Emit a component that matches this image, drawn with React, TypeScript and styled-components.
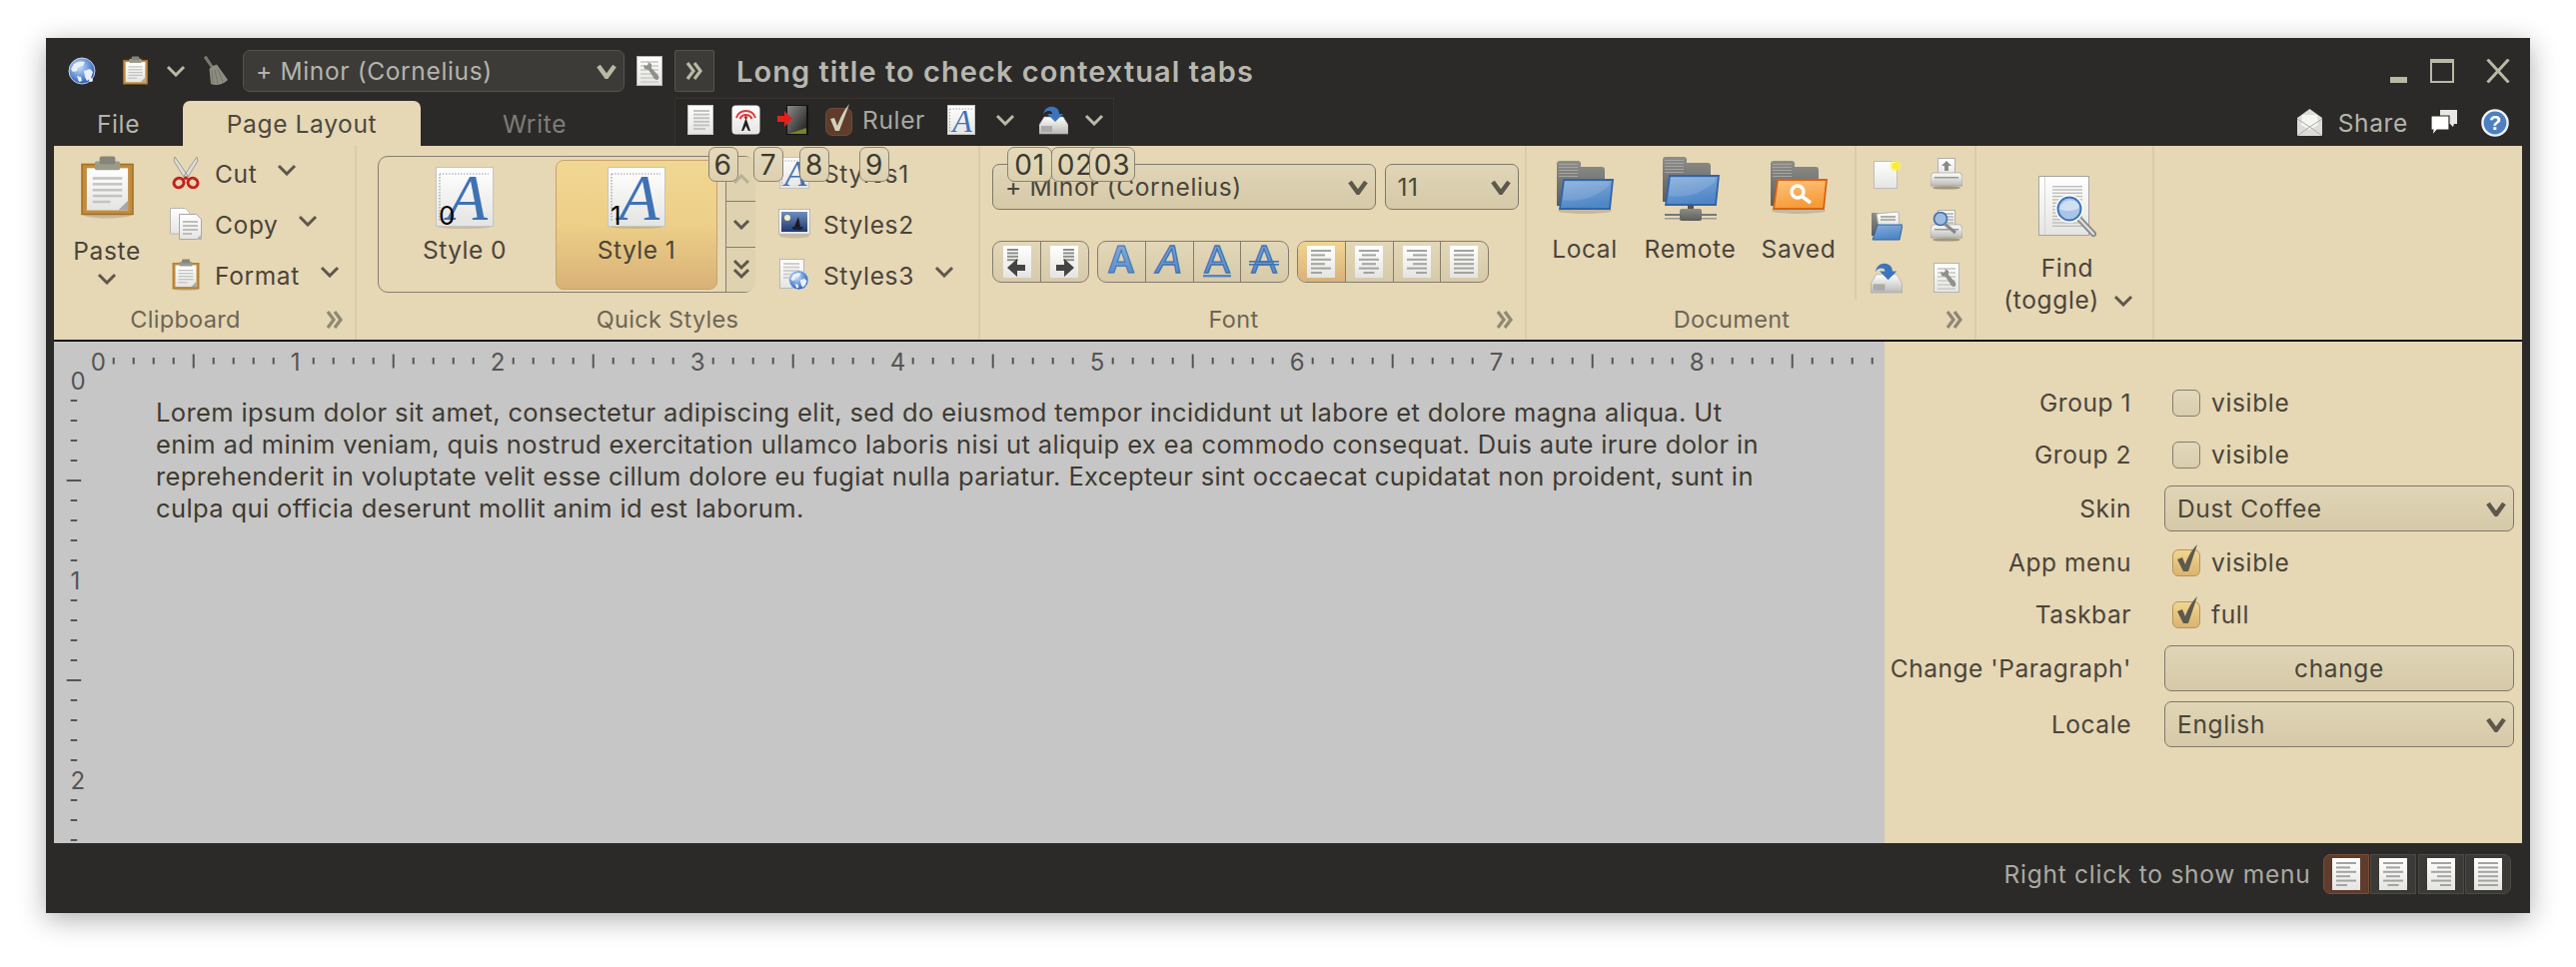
import React from "react";
import styled, { createGlobalStyle } from "styled-components";

const FONT = `Inter, "Noto Sans", "Liberation Sans", sans-serif`;
const G = createGlobalStyle`
  html, body { margin: 0; padding: 0; background: #fff; }
  body { font-family: ${FONT}; }
`;

const Page = styled.div`
  width: 2578px; height: 968px; padding: 38px 0 0 46px; box-sizing: border-box; overflow: hidden;
`;
const Win = styled.div`
  position: relative; width: 2486px; height: 876px; background: #2b2a28; display: flex; flex-direction: column;
  box-shadow: 0 6px 26px rgba(0,0,0,.32); font-size: 24.5px; letter-spacing: .65px;
`;
const TitleRow = styled.div`
  height: 58px; flex: none; display: flex; align-items: center; padding: 8px 20px 0 22px; box-sizing: border-box;
`;
const Slot = styled.span<{ $ml?: number }>`
  display: inline-flex; flex: none; align-items: center; justify-content: center; margin-left: ${p => p.$ml ?? 0}px;
`;
const Title = styled.div`
  margin-left: 22px; font-size: 29px; font-weight: 600; letter-spacing: 1.05px; color: #b7b7b0; white-space: nowrap;
`;
const WinControls = styled.div`
  margin-left: auto; display: flex; align-items: center; gap: 23px;
`;
const DarkBtn = styled.span`
  margin-left: 12px; width: 40px; height: 42px; box-sizing: border-box; background: #3c3b37; border: 1px solid #55544e; border-radius: 2px;
  display: flex; align-items: center; justify-content: center;
`;
const TabsRow = styled.div`
  height: 50px; flex: none; display: flex; align-items: stretch; padding: 0 21px 0 8px; box-sizing: border-box;
`;
const Tab = styled.div<{ $w: number; $active?: boolean; $muted?: boolean }>`
  width: ${p => p.$w}px; margin-top: 5px; flex: none; display: flex; align-items: center; justify-content: center;
  border-radius: 7px 7px 0 0;
  background: ${p => (p.$active ? "#e6d7b5" : "transparent")};
  color: ${p => (p.$active ? "#4d483d" : p.$muted ? "#7e7d77" : "#b4b4ad")};
`;
const Taskbar = styled.div`
  margin: 2px 0 0 26px; width: 440px; box-sizing: border-box; display: flex; align-items: center; padding: 0 0 5px 12px; color: #a8a8a0;
  background: #292826; border-top: 1px solid #37332c; border-left: 1px solid #37332c; border-right: 1px solid #37332c;
`;
const ShareBox = styled.div`
  margin-left: auto; display: flex; align-items: center; color: #b4b4ad; padding-top: 3px;
`;
const Ribbon = styled.div`
  margin: 0 8px; height: 194px; flex: none; background: #e6d7b5; display: flex; color: #4a453a;
`;
const BlackLine = styled.div`
  margin: 0 8px; height: 2px; flex: none; background: #141311;
`;
const Band = styled.div<{ $w: number; $noSep?: boolean }>`
  width: ${p => p.$w}px; flex: none; box-sizing: border-box; display: flex; flex-direction: column; 
  border-right: ${p => (p.$noSep ? "none" : "2px solid #dccba9")};
`;
const BandBody = styled.div`
  height: 154px; flex: none; display: flex; box-sizing: border-box;
`;
const BandTitle = styled.div`
  height: 40px; flex: none; display: flex; align-items: center; color: #6d6655; font-size: 23.5px; letter-spacing: .3px; padding-bottom: 1px; box-sizing: border-box;
`;
const BandLabel = styled.div`
  flex: 1; text-align: center;
`;
const Launcher = styled.div`
  width: 38px; flex: none; box-sizing: border-box; padding-left: 9px; display: flex; align-items: center;
`;
const PasteCol = styled.div`
  width: 106px; flex: none; display: flex; flex-direction: column; align-items: center; padding-top: 9px; box-sizing: border-box;
`;
const PasteLabel = styled.div`
  margin-top: 15px; line-height: 34px; margin-bottom: 5px;
`;
const RowsCol = styled.div<{ $ml?: number }>`
  margin-left: ${p => p.$ml ?? 0}px; display: flex; flex-direction: column; padding-top: 1px;
`;
const CmdRow = styled.div`
  height: 52px; display: flex; align-items: center; gap: 13px; white-space: nowrap;
`;
const CmdLabel = styled.span`
  padding-top: 2px;
`;
const CmdIcon = styled.span`
  width: 32px; flex: none; display: flex; justify-content: center;
`;
const CmdChevron = styled.span`
  margin-left: 7px; display: flex; padding-bottom: 6px;
`;
const Gallery = styled.div`
  margin: 10px 0 0 21px; width: 377px; height: 137px; box-sizing: border-box; border: 1.5px solid #857e6e; border-radius: 10px; display: flex;
  padding: 2.5px 0 2.5px 5px; flex: none;
`;
const GalleryItem = styled.div<{ $on?: boolean }>`
  width: 162px; flex: none; display: flex; flex-direction: column; align-items: center; box-sizing: border-box; padding-top: 6px; border-radius: 8px;
  margin-right: 10px;
  ${p => p.$on ? "background: linear-gradient(#f1d793 0%, #edcf88 50%, #d8b177 100%); border: 1px solid #c8a36d;" : "border: 1px solid transparent;"}
`;
const StyleThumb = styled.div`
  position: relative; width: 58px; height: 62px;
`;
const ThumbDigit = styled.span`
  position: absolute; left: 3px; top: 36px; color: #000; font-size: 26px; line-height: 26px; letter-spacing: 0;
`;
const ItemLabel = styled.div`
  margin-top: 3px; line-height: 36px; letter-spacing: .45px;
`;
const ScrollCol = styled.div`
  margin: -2.5px 0 -2.5px -2px; width: 29px; flex: none; display: flex; flex-direction: column; background: #ded2b0; border-left: 1.5px solid #857e6e; border-radius: 0 9px 9px 0; 
`;
const ScrollBtn = styled.div<{ $last?: boolean }>`
  flex: 1; display: flex; align-items: center; justify-content: center; border-bottom: ${p => (p.$last ? "none" : "1.5px solid #857e6e")};
`;
const FontBody = styled.div`
  display: flex; flex-direction: column; padding: 18px 0 0 12px; gap: 31px;
`;
const Line = styled.div<{ $gap: number }>`
  display: flex; gap: ${p => p.$gap}px;
`;
const Combo = styled.div<{ $w?: number; $h?: number; $dark?: boolean }>`
  width: ${p => (p.$w ? p.$w + "px" : "100%")}; height: ${p => p.$h ?? 46}px; flex: none; box-sizing: border-box; display: flex; align-items: center; justify-content: space-between;
  padding: 0 7px 0 12px; border-radius: 7px; white-space: nowrap;
  ${p => p.$dark
    ? "background: #3c3b37; border: 1.5px solid #55544e; color: #b4b4ad; margin-left: 15px;"
    : "background: linear-gradient(#e0d5b6, #d5c9a8); border: 1.5px solid #7f7969; color: #4a453a;"}
`;
const Strip = styled.div`
  display: flex; height: 42px; box-sizing: border-box; border: 1.5px solid #857e6e; border-radius: 9px; overflow: hidden; background: linear-gradient(#e2d7b8, #d6caaa);
`;
const StripBtn = styled.div<{ $on?: boolean; $w?: number; $first?: boolean }>`
  width: ${p => p.$w ?? 47.5}px; box-sizing: border-box; display: flex; align-items: center; justify-content: center;
  border-left: ${p => (p.$first ? "none" : "1.5px solid #857e6e")};
  ${p => p.$on ? "background: linear-gradient(#f0d491, #d9b27a);" : ""}
`;
const LargeBtn = styled.div<{ $w: number }>`
  width: ${p => p.$w}px; flex: none; display: flex; flex-direction: column; align-items: center; box-sizing: border-box;
`;
const LargeIcon = styled.div<{ $top: number }>`
  height: ${p => 85 - p.$top}px; margin-top: ${p => p.$top}px; display: flex; align-items: flex-start; justify-content: center;
`;
const LargeLabel = styled.div`
  line-height: 36px; white-space: nowrap;
`;
const SmallGrid = styled.div`
  margin-left: auto; width: 122px; height: 154px; flex: none; box-sizing: border-box; border-left: 2px solid #dccba9; display: grid; grid-template-columns: 60px 60px; grid-auto-rows: 52px; 
  justify-items: center; align-items: center; padding-top: 2px;
`;
const FindBody = styled.div`
  width: 100%; display: flex; flex-direction: column; align-items: center; padding: 30px 0 0 6px; box-sizing: border-box; line-height: 33px;
`;
const FindLabel = styled.div`
  margin-top: 14px; text-align: center;
`;
const FindToggle = styled.div`
  display: flex; align-items: center; gap: 14px; margin: -1px 0 0 2px; white-space: nowrap;
`;
const Main = styled.div`
  margin: 0 8px; height: 502px; flex: none; display: flex;
`;
const Editor = styled.div`
  width: 1832px; flex: none; background: #c6c6c6; display: flex; flex-direction: column; overflow: hidden;
`;
const RulerSvg = styled.svg`
  flex: none; display: block; overflow: visible;
`;
const EditorBody = styled.div`
  flex: 1; display: flex; overflow: hidden;
`;
const Para = styled.div`
  padding: 27px 0 0 62px; color: #3f3a32; font-size: 25.5px; line-height: 32px; letter-spacing: 0.38px;
`;
const ParaLine = styled.div`
  white-space: nowrap;
`;
const Side = styled.div`
  flex: 1; background: #e6d7b5; display: grid; grid-template-columns: 247px 350px; column-gap: 33px; row-gap: 10px; grid-template-rows: 42px 42px 46px 42px 42px 46px 46px;
  padding-top: 40px; box-sizing: border-box; color: #4a453a; align-content: start;
`;
const SideLabel = styled.div`
  text-align: right; align-self: center; white-space: nowrap; letter-spacing: .55px;
`;
const CheckLine = styled.div`
  display: flex; align-items: center; padding-left: 8px; gap: 11px;
`;
const CheckBox = styled.span<{ $on?: boolean }>`
  position: relative; width: 28px; height: 27px; box-sizing: border-box; border-radius: 6px; flex: none;
  border: 1.5px solid ${p => (p.$on ? "#b9935c" : "#857e6e")};
  background: ${p => (p.$on ? "linear-gradient(#f0d68f, #dcb271)" : "linear-gradient(#e2d8ba, #d8cdad)")};
`;
const CheckMark = styled.svg`
  position: absolute; left: 3px; top: -6px;
`;
const ChangeBtn = styled.div`
  height: 46px; box-sizing: border-box; display: flex; align-items: center; justify-content: center; background: linear-gradient(#e0d5b6, #d5c9a8); border: 1.5px solid #7f7969; border-radius: 7px;
`;
const StatusBar = styled.div`
  flex: 1; display: flex; align-items: center; justify-content: flex-end; padding: 0 19px 8px 0; box-sizing: border-box; color: #a9a9a2; gap: 12px; letter-spacing: .75px;
`;
const ViewStrip = styled.div`
  display: flex; gap: 1.5px; height: 40px;
`;
const ViewBtn = styled.div<{ $on?: boolean; $pos?: "l" | "r" }>`
  width: 46px; display: flex; align-items: center; justify-content: center; box-sizing: border-box; border: 1px solid #4b4a45;
  background: ${p => (p.$on ? "#5f3c2c" : "#3b3a36")};
  border-radius: ${p => (p.$pos === "l" ? "7px 0 0 7px" : p.$pos === "r" ? "0 7px 7px 0" : "0")};
  ${p => (p.$on ? "border-color:#7a4d37;" : "")}
`;
const KeyTip = styled.div<{ $l: number; $w: number }>`
  position: absolute; left: ${p => p.$l}px; top: 109px; width: ${p => p.$w}px; height: 35px; box-sizing: border-box; display: flex; align-items: center; justify-content: center;
  background: linear-gradient(#e4dabc, #dcd0af); border: 1.5px solid #8a8474; border-radius: 7px; color: #3e3a31; font-size: 28px; letter-spacing: .8px; z-index: 5;
`;
const Hidden = styled.svg`
  position: absolute; width: 0; height: 0;
`;
const Spacer = styled.span<{ $w: number }>`
  display: inline-block; width: ${p => p.$w}px; flex: none;
`;

/* ---------- drawings ---------- */
const Defs = () => (
  <Hidden aria-hidden="true">
    <defs>
      <linearGradient id="paper" x1="0" y1="0" x2="0" y2="1"><stop offset="0" stopColor="#ffffff" /><stop offset="1" stopColor="#e4e4e2" /></linearGradient>
      <linearGradient id="blue" x1="0" y1="0" x2="0.3" y2="1"><stop offset="0" stopColor="#86aedb" /><stop offset="1" stopColor="#4f86c6" /></linearGradient>
      <linearGradient id="orange" x1="0" y1="0" x2="0.3" y2="1"><stop offset="0" stopColor="#fdc47f" /><stop offset="1" stopColor="#f79a38" /></linearGradient>
      <linearGradient id="gray" x1="0" y1="0" x2="0" y2="1"><stop offset="0" stopColor="#8d8d8a" /><stop offset="1" stopColor="#5c5c5a" /></linearGradient>
      <radialGradient id="globe" cx="0.4" cy="0.35" r="0.75"><stop offset="0" stopColor="#cfe0f7" /><stop offset="0.55" stopColor="#5f8fd6" /><stop offset="1" stopColor="#1f4b9e" /></radialGradient>
      <linearGradient id="door" x1="0" y1="0" x2="1" y2="1"><stop offset="0" stopColor="#8a8a88" /><stop offset="1" stopColor="#1c1c1c" /></linearGradient>
      <linearGradient id="textA" x1="0" y1="0" x2="0" y2="1"><stop offset="0" stopColor="#8db1de" /><stop offset="1" stopColor="#4f86c6" /></linearGradient>
      <linearGradient id="sky" x1="0" y1="0" x2="0" y2="1"><stop offset="0" stopColor="#6f8fc0" /><stop offset="1" stopColor="#22386b" /></linearGradient>
      <linearGradient id="drive" x1="0" y1="0" x2="0" y2="1"><stop offset="0" stopColor="#fff" /><stop offset="1" stopColor="#b9b9b5" /></linearGradient>
    </defs>
  </Hidden>
);

const Chev = ({ w = 20, h = 12, sw = 3, c = "#5d584b", up = false }: { w?: number; h?: number; sw?: number; c?: string; up?: boolean }) => (
  <svg width={w} height={h} viewBox={`0 0 ${w} ${h}`}>
    <polyline points={up ? `2,${h - 2} ${w / 2},2 ${w - 2},${h - 2}` : `2,2 ${w / 2},${h - 2} ${w - 2},2`} fill="none" stroke={c} strokeWidth={sw} />
  </svg>
);
const ComboChev = ({ c }: { c: string }) => <Chev w={20} h={15} sw={4.5} c={c} />;
const Launch = ({ c = "#8f8875" }: { c?: string }) => (
  <svg width="18" height="20" viewBox="0 0 18 20">
    <polyline points="2,2 8,10 2,18" fill="none" stroke={c} strokeWidth="3.2" />
    <polyline points="9,2 15,10 9,18" fill="none" stroke={c} strokeWidth="3.2" />
  </svg>
);
const Lines = ({ x, y, w, n, gap = 5, h = 2, c = "#bdbdb9", last = 0.6 }: { x: number; y: number; w: number; n: number; gap?: number; h?: number; c?: string; last?: number }) => (
  <g fill={c}>
    {Array.from({ length: n }).map((_, i) => (
      <rect key={i} x={x} y={y + i * gap} width={i === n - 1 ? w * last : w} height={h} />
    ))}
  </g>
);
const Globe = ({ s = 28 }: { s?: number }) => (
  <svg width={s} height={s} viewBox="0 0 28 28">
    <circle cx="14" cy="14" r="13" fill="url(#globe)" stroke="#dfe8f6" strokeWidth=".8" />
    <path d="M6 7c4-3 8-3 11-2l-2 4-5 1-1 4-4 1-2-3zM16 14l6-2 3 3-2 6-4 3-2-4zM9 19l4 1 1 4-3 1z" fill="#e9f0fb" />
    <circle cx="23" cy="23" r="2" fill="#fff" opacity=".9" />
  </svg>
);
const ClipboardIc = ({ w = 28, h = 30 }: { w?: number; h?: number }) => (
  <svg width={w} height={h} viewBox="0 0 54 64">
    <ellipse cx="27" cy="61" rx="24" ry="3" fill="#000" opacity=".14" />
    <rect x="1" y="9" width="52" height="51" fill="#c38c3c" stroke="#a26f22" strokeWidth="1.5" />
    <rect x="6" y="13" width="42" height="43" fill="url(#paper)" />
    <rect x="14" y="6" width="26" height="9" rx="2" fill="#9a9a8d" />
    <rect x="19" y="1" width="16" height="8" rx="2" fill="#85857a" />
    <Lines x={12} y={22} w={30} n={5} gap={6} h={2.6} c="#c3c3bf" />
    <polygon points="38,56 48,46 48,56" fill="#a8a8a4" />
  </svg>
);
const Broom = () => (
  <svg width="25" height="30" viewBox="0 0 25 30">
    <path d="M1 1.500L3.500 0 10 10 14 8.500 25 24c-5 5-12 6-17 4L6.500 13 8 11.500z" fill="#8d8d7f" />
    <path d="M1 1.500L3.500 0 10 10 8 11.500z" fill="#777769" />
    <path d="M9 15l1 12M12 14l3 14M15 13l5 13" stroke="#74746a" strokeWidth="1" fill="none" />
  </svg>
);
const WrenchDoc = ({ w = 26, h = 30 }: { w?: number; h?: number }) => (
  <svg width={w} height={h} viewBox="0 0 26 30">
    <rect x=".5" y=".5" width="25" height="29" fill="url(#paper)" stroke="#b5b5b1" />
    <Lines x={4} y={5} w={18} n={6} gap={4} c="#d2d2ce" last={1} />
    <path d="M11 6l4 2v4l7 8c1 2 0 4-2 4l-2-1-6-9-4-1-1-4 3 1 2-2z" fill="#8f8f8b" />
  </svg>
);
const Scissors = () => (
  <svg width="28" height="32" viewBox="0 0 28 32">
    <path d="M3 0l13 19-3 3L2 4zM25 0L12 19l3 3L26 4z" fill="#dcdcd8" stroke="#8d8d89" strokeWidth=".8" />
    <ellipse cx="7" cy="26" rx="5" ry="4.6" fill="none" stroke="#c4211c" strokeWidth="3" transform="rotate(-30 7 26)" />
    <ellipse cx="21" cy="26" rx="5" ry="4.6" fill="none" stroke="#c4211c" strokeWidth="3" transform="rotate(30 21 26)" />
    <path d="M11 22l3-3 3 3-3 1z" fill="#c4211c" />
  </svg>
);
const CopyIc = () => (
  <svg width="32" height="32" viewBox="0 0 32 32">
    <path d="M.5.5h15l4 4V26H.5z" fill="url(#paper)" stroke="#b8b8b4" />
    <path d="M9.5 6.500h17l5 5v20h-22z" fill="url(#paper)" stroke="#a9a9a5" />
    <Lines x={13} y={13} w={15} n={4} gap={4} c="#bdbdb9" />
    <polygon points="26,32 32,26 32,32" fill="#b5b5b1" />
  </svg>
);
const ADoc = ({ w = 28, h = 30, fs = 32 }: { w?: number; h?: number; fs?: number }) => (
  <svg width={w} height={h} viewBox={`0 0 ${w} ${h}`}>
    <rect x=".5" y=".5" width={w - 1} height={h - 1} fill="url(#paper)" stroke="#c4c4c0" />
    <path d={`M2.5 4H${w - 3}M2.5 4V${h - 3}`} stroke="#a9a9a5" strokeWidth="1" strokeDasharray="1.5 1.5" fill="none" />
    <text x={w * 0.54} y={h - 3.5} textAnchor="middle" fontFamily="Liberation Serif, serif" fontStyle="italic" fontSize={fs} letterSpacing="0" fill="#3f72b5">A</text>
  </svg>
);
const BigAThumb = () => (
  <svg width="58" height="62" viewBox="0 0 58 62">
    <ellipse cx="29" cy="60" rx="26" ry="2" fill="#000" opacity=".12" />
    <rect x=".5" y=".5" width="57" height="59" fill="url(#paper)" stroke="#c4c4c0" />
    <path d="M4 7H53M4 7V54" stroke="#9d9d99" strokeWidth="1.2" strokeDasharray="1.5 1.5" fill="none" />
    <text x="32" y="53" textAnchor="middle" fontFamily="Liberation Serif, serif" fontStyle="italic" fontSize="66" letterSpacing="0" fill="#3f72b5">A</text>
  </svg>
);
const Picture = () => (
  <svg width="32" height="30" viewBox="0 0 32 30">
    <ellipse cx="16" cy="27" rx="15" ry="2.5" fill="#000" opacity=".12" />
    <rect x=".5" y=".5" width="31" height="25" fill="url(#paper)" stroke="#b8b8b4" />
    <rect x="3" y="3" width="26" height="20" fill="url(#sky)" />
    <circle cx="9" cy="9" r="3" fill="#f3efc0" />
    <path d="M20 8l2 10h-6z" fill="#1a1a20" /><path d="M13 18h12l-2 3h-8z" fill="#14203f" />
  </svg>
);
const DocGlobe = () => (
  <svg width="30" height="32" viewBox="0 0 30 32">
    <rect x=".5" y=".5" width="24" height="29" fill="url(#paper)" stroke="#b8b8b4" />
    <Lines x={4} y={4} w={16} n={5} gap={3.5} c="#cfcfcb" />
    <g transform="translate(9 11) scale(.74)"><circle cx="14" cy="14" r="13" fill="url(#globe)" stroke="#dfe8f6" strokeWidth=".8" /><path d="M6 7c4-3 8-3 11-2l-2 4-5 1-1 4-4 1-2-3zM16 14l6-2 3 3-2 6-4 3-2-4zM9 19l4 1 1 4-3 1z" fill="#e9f0fb" /></g>
  </svg>
);
const PageLines = ({ w = 26, h = 30 }: { w?: number; h?: number }) => (
  <svg width={w} height={h} viewBox="0 0 26 30">
    <rect x=".5" y=".5" width="25" height="29" fill="url(#paper)" stroke="#c4c4c0" />
    <Lines x={6} y={5} w={16} n={5} gap={3.6} c="#c2c2be" last={1} />
    <Lines x={6} y={23} w={12} n={1} c="#c2c2be" last={1} />
  </svg>
);
const Broadcast = () => (
  <svg width="29" height="30" viewBox="0 0 29 30">
    <rect x=".5" y=".5" width="28" height="29" rx="4" fill="url(#paper)" />
    <path d="M5 13a10 10 0 0 1 19 0M8.500 14a6.500 6.500 0 0 1 12 0" fill="none" stroke="#e0393a" strokeWidth="2" />
    <path d="M14.500 13l4.500 13h-2l-2.500-5-2.500 5h-2z" fill="#222" />
    <circle cx="14.5" cy="12.5" r="1.6" fill="#c4211c" />
  </svg>
);
const ExitDoor = () => (
  <svg width="31" height="30" viewBox="0 0 31 30">
    <rect x="9" y="0" width="22" height="30" fill="#111" />
    <path d="M10 1l19 0v22l-19 6z" fill="url(#door)" />
    <path d="M10 29l19-6v6z" fill="#7c8126" />
    <path d="M0 11h7V6l8 8-8 8v-5H0z" fill="#e3201e" />
  </svg>
);
const TaskCheck = () => (
  <svg width="27" height="32" viewBox="0 0 27 32">
    <rect x=".5" y="4.500" width="26" height="27" rx="6" fill="#5f3c2c" stroke="#6f4c3a" />
    <path d="M5 15l4-1 3 8c3-8 6-15 12-22-3 9-7 18-10 27h-4z" fill="#d2d2bd" />
  </svg>
);
const Drive = ({ w = 29, h = 30 }: { w?: number; h?: number }) => (
  <svg width={w} height={h} viewBox="0 0 29 30">
    <path d="M5 12h19l5 8v9H0v-9z" fill="url(#drive)" stroke="#a5a5a1" strokeWidth=".6" />
    <rect x="2" y="21" width="11" height="6" fill="#aaa" />
    <path d="M4 10C5 2 12 0 17 3c2 1 3 3 3 6h4l-8 8-8-8h5c0-2-1-3-3-3-3 0-5 1-6 4z" fill="#3c75bb" />
  </svg>
);
const Folder = ({ kind, tall }: { kind: "local" | "remote" | "saved"; tall?: boolean }) => (
  <svg width="58" height={tall ? 66 : 54} viewBox={`0 0 58 ${tall ? 66 : 54}`}>
    {!tall && <ellipse cx="29" cy="51" rx="27" ry="3" fill="#000" opacity=".14" />}
    <path d="M1 4a3 3 0 0 1 3-3h18a3 3 0 0 1 3 4v2h21a3 3 0 0 1 3 3v36H1z" fill="url(#gray)" />
    <Lines x={3} y={4} w={19} n={5} gap={3} h={1} c="#a5a5a2" last={1} />
    <path d="M8 20h49l-3 29H4z" fill={kind === "saved" ? "url(#orange)" : "url(#blue)"} stroke={kind === "saved" ? "#d8640d" : "#2e65ab"} strokeWidth="1.8" />
    {kind === "saved" && (
      <g fill="none" stroke="#fff"><circle cx="28" cy="32" r="6" strokeWidth="3.4" /><path d="M33 37l8 6" strokeWidth="3.6" /></g>
    )}
    {kind !== "saved" && <path d="M7 40c14 2 30 0 46-14l1-4H9z" fill="#fff" opacity=".12" />}
    {tall && (
      <g>
        <rect x="26" y="49" width="6" height="6" fill="#555" />
        <rect x="3" y="58" width="52" height="2" fill="#777" /><rect x="3" y="62" width="52" height="1.5" fill="#999" />
        <rect x="18" y="53" width="22" height="12" rx="2" fill="url(#gray)" />
      </g>
    )}
  </svg>
);
const NewDoc = () => (
  <svg width="32" height="30" viewBox="0 0 32 30">
    <rect x="3.5" y="2.5" width="23" height="27" fill="url(#paper)" stroke="#bdbdb9" />
    <circle cx="25" cy="7" r="6" fill="#f7f35a" opacity=".55" /><circle cx="25" cy="7" r="3.6" fill="#f7ee2e" />
  </svg>
);
const OpenFolder = () => (
  <svg width="32" height="32" viewBox="0 0 32 32">
    <path d="M1 3h10l2 3v20H1z" fill="url(#gray)" />
    <path d="M6 4l22-2 1 14H8z" fill="url(#paper)" stroke="#b8b8b4" />
    <Lines x={10} y={6} w={15} n={2} gap={3} c="#b0b0ac" last={1} />
    <path d="M7 15h25l-3 15H2z" fill="url(#blue)" stroke="#2e65ab" />
  </svg>
);
const Printer = ({ preview }: { preview?: boolean }) => (
  <svg width="32" height="32" viewBox="0 0 32 32">
    <rect x="7.5" y=".5" width="17" height="17" fill="url(#paper)" stroke="#b0b0ac" />
    {!preview && <path d="M16 3l5 5h-3v5h-4V8h-3z" fill="#8a8a86" />}
    {preview && <Lines x={13} y={3} w={10} n={4} gap={3} c="#c2c2be" last={1} />}
    <path d="M2 15h28l2 4v9H0v-9z" fill="url(#drive)" stroke="#9d9d99" strokeWidth=".7" />
    <rect x="4" y="19" width="24" height="1.5" fill="#999" />
    <ellipse cx="16" cy="30" rx="14" ry="1.6" fill="#000" opacity=".3" />
    {preview && <g><circle cx="10" cy="9" r="6.5" fill="#9dbce0" stroke="#3f6fa8" strokeWidth="1.6" /><path d="M14 14l11 9" stroke="#888" strokeWidth="3" /></g>}
  </svg>
);
const FindDoc = () => (
  <svg width="58" height="62" viewBox="0 0 58 62">
    <rect x=".5" y=".5" width="50" height="59" fill="url(#paper)" stroke="#a5a5a1" />
    <rect x="6" y="1" width="1" height="58" fill="#d5d5d1" />
    <Lines x={14} y={10} w={30} n={13} gap={3.3} h={1.4} c="#bdbdb9" last={1} />
    <path d="M40 42l15 16" stroke="#888" strokeWidth="6" strokeLinecap="round" />
    <path d="M40 42l15 16" stroke="#ddd" strokeWidth="2.5" strokeLinecap="round" />
    <circle cx="31" cy="33" r="14" fill="#fff" />
    <circle cx="31" cy="33" r="11.5" fill="#a9c5e7" stroke="#3f74b5" strokeWidth="2" />
    <path d="M21 33c5 3 14 3 20-1 0-9-16-11-20 1z" fill="#cfe0f3" />
  </svg>
);
const AlignDoc = ({ kind }: { kind: "l" | "c" | "r" | "j" }) => {
  const rows = [20, 14, 20, 14, 20, 11];
  return (
    <svg width="28" height="32" viewBox="0 0 28 32">
      <rect x="0" y="0" width="28" height="32" fill="url(#paper)" />
      {rows.map((r, i) => {
        const w = kind === "j" ? 20 : r;
        const x = kind === "l" || kind === "j" ? 4 : kind === "r" ? 24 - w : 14 - w / 2;
        return <rect key={i} x={x} y={4 + i * 4.4} width={w} height="2" fill="#a3a39f" />;
      })}
    </svg>
  );
};
const IndentDoc = ({ right }: { right?: boolean }) => (
  <svg width="28" height="32" viewBox="0 0 28 32">
    <rect x="0" y="0" width="28" height="32" fill="url(#paper)" />
    <Lines x={right ? 13 : 4} y={3} w={11} n={4} gap={3.4} c="#8e8e8a" last={1} />
    {right ? <path d="M6 19h8v-6l10 9-10 9v-6H6z" fill="#444" /> : <path d="M22 19h-8v-6L4 22l10 9v-6h8z" fill="#444" />}
  </svg>
);
const StyleA = ({ kind }: { kind: "b" | "i" | "u" | "s" }) => (
  <svg width="34" height="36" viewBox="0 0 34 36">
    <text x="17" y="29" textAnchor="middle" fontFamily="Liberation Sans, sans-serif" fontWeight={kind === "b" ? 700 : 400} fontStyle={kind === "i" ? "italic" : "normal"}
      fontSize="38" letterSpacing="0" fill="url(#textA)" stroke="#3f74b5" strokeWidth={kind === "b" ? 1 : 1.4}>A</text>
    {kind === "u" && <rect x="3" y="31" width="28" height="2.4" fill="#4f86c6" />}
    {kind === "s" && <g><rect x="2" y="17" width="30" height="1.6" fill="#3f74b5" /><rect x="2" y="20" width="30" height="1.6" fill="#3f74b5" /></g>}
  </svg>
);
const Envelope = () => (
  <svg width="25" height="27" viewBox="0 0 25 27">
    <path d="M0 9L12.5 0 25 9v18H0z" fill="#dcdcd8" />
    <path d="M5 6h15l1 10-8.5 5L4 16z" fill="#f5f5f2" />
    <path d="M0 27l12.5-9L25 27M0 10l12.5 8L25 10" fill="none" stroke="#aaa" strokeWidth="1" />
  </svg>
);
const Chat = () => (
  <svg width="28" height="28" viewBox="0 0 28 28">
    <path d="M10 1h17v14h-3l-1 3-3-3H10z" fill="#e7e7e4" />
    <path d="M1 7h18v14H7l-5 6 1-6H1z" fill="#fff" stroke="#2b2a28" strokeWidth="1.2" />
  </svg>
);
const Help = () => (
  <svg width="28" height="28" viewBox="0 0 28 28">
    <circle cx="14" cy="14" r="12.6" fill="#4e7fc0" stroke="#eef3fa" strokeWidth="2.4" />
    <text x="14" y="21" textAnchor="middle" fontFamily="Liberation Sans, sans-serif" fontWeight="700" fontSize="20" letterSpacing="0" fill="#fff">?</text>
  </svg>
);
const Minimize = () => <svg width="17" height="24" viewBox="0 0 17 24"><rect x="0" y="18" width="17" height="6" fill="#b9b9a5" /></svg>;
const Maximize = () => <svg width="24" height="24" viewBox="0 0 24 24"><rect x="1" y="1.5" width="22" height="21.5" fill="none" stroke="#b9b9a5" strokeWidth="2" /><rect x="0" y="0" width="24" height="4" fill="#b9b9a5" /></svg>;
const Close = () => <svg width="24" height="24" viewBox="0 0 24 24"><path d="M1.5 0.5L22.5 23.5M22.5 0.5L1.5 23.5" fill="none" stroke="#b9b9a5" strokeWidth="3" /></svg>;
const Tick = () => (
  <CheckMark width="24" height="30" viewBox="0 0 24 30">
    <path d="M1 15l5-2 3 7C12 12 15 6 21 0c-3 9-6 18-9 27H7z" fill="#5c5a4e" />
  </CheckMark>
);

const RULER_FONT = "Inter, sans-serif";
const HRuler = () => {
  const ticks = [];
  for (let i = 0; i <= 89; i++) {
    const x = 39.7 + i * 20;
    if (i % 10 === 0) ticks.push(<text key={i} x={x - 3} y={29} fontFamily={RULER_FONT} fontSize="24" letterSpacing="0" fill="#555">{i / 10}</text>);
    else if (i % 5 === 0) ticks.push(<rect key={i} x={x - 1} y={12.5} width="2" height="14" fill="#555" />);
    else ticks.push(<rect key={i} x={x - 1} y={16} width="2" height="6.5" fill="#555" />);
  }
  return <RulerSvg width="1832" height="28" viewBox="0 0 1832 28">{ticks}</RulerSvg>;
};
const VRuler = () => {
  const ticks = [];
  for (let i = 0; i <= 24; i++) {
    const y = 11 + i * 20;
    if (i % 10 === 0) ticks.push(<text key={i} x={16.5} y={y + 9} fontFamily={RULER_FONT} fontSize="24" letterSpacing="0" fill="#555">{i / 10}</text>);
    else if (i % 5 === 0) ticks.push(<rect key={i} x={12.7} y={y - 1} width="14.5" height="2" fill="#555" />);
    else ticks.push(<rect key={i} x={16.7} y={y - 1} width="6.5" height="2" fill="#555" />);
  }
  return <RulerSvg width="40" height="474" viewBox="0 0 40 474">{ticks}</RulerSvg>;
};

const tips: [string, number, number][] = [
  ["6", 662.5, 30], ["7", 708, 30], ["8", 754, 30], ["9", 814, 30],
  ["01", 962, 45], ["02", 1006, 48], ["03", 1044, 46],
];

export default function App() {
  return (
    <Page>
      <G />
      <Defs />
      <Win>
        <TitleRow>
          <Slot><Globe /></Slot>
          <Slot $ml={26}><ClipboardIc w={27} h={30} /></Slot>
          <Slot $ml={17}><Chev c="#b9b9a5" /></Slot>
          <Slot $ml={17}><Broom /></Slot>
          <Combo $w={382} $h={42} $dark>
            <span>+ Minor (Cornelius)</span>
            <ComboChev c="#b9b9a5" />
          </Combo>
          <Slot $ml={12}><WrenchDoc /></Slot>
          <DarkBtn><Launch c="#b9b9a5" /></DarkBtn>
          <Title>Long title to check contextual tabs</Title>
          <WinControls>
            <Minimize /><Maximize /><Slot $ml={9}><Close /></Slot>
          </WinControls>
        </TitleRow>
        <TabsRow>
          <Tab $w={129}>File</Tab>
          <Tab $w={238} $active>Page Layout</Tab>
          <Tab $w={228} $muted>Write</Tab>
          <Taskbar>
            <PageLines />
            <Slot $ml={18}><Broadcast /></Slot>
            <Slot $ml={17}><ExitDoor /></Slot>
            <Slot $ml={17}><TaskCheck /></Slot>
            <Slot $ml={10}>Ruler</Slot>
            <Slot $ml={22}><ADoc /></Slot>
            <Slot $ml={20}><Chev c="#b9b9a5" /></Slot>
            <Slot $ml={24}><Drive /></Slot>
            <Slot $ml={16}><Chev c="#b9b9a5" /></Slot>
          </Taskbar>
          <ShareBox>
            <Envelope />
            <Slot $ml={16}>Share</Slot>
            <Slot $ml={22}><Chat /></Slot>
            <Slot $ml={23}><Help /></Slot>
          </ShareBox>
        </TabsRow>
        <Ribbon>
          <Band $w={303}>
            <BandBody>
              <PasteCol>
                <ClipboardIc w={53} h={64} />
                <PasteLabel>Paste</PasteLabel>
                <Chev />
              </PasteCol>
              <RowsCol $ml={10}>
                <CmdRow><CmdIcon><Scissors /></CmdIcon><CmdLabel>Cut</CmdLabel><CmdChevron><Chev /></CmdChevron></CmdRow>
                <CmdRow><CmdIcon><CopyIc /></CmdIcon><CmdLabel>Copy</CmdLabel><CmdChevron><Chev /></CmdChevron></CmdRow>
                <CmdRow><CmdIcon><ClipboardIc w={28} h={32} /></CmdIcon><CmdLabel>Format</CmdLabel><CmdChevron><Chev /></CmdChevron></CmdRow>
              </RowsCol>
            </BandBody>
            <BandTitle><BandLabel>Clipboard</BandLabel><Launcher><Launch /></Launcher></BandTitle>
          </Band>
          <Band $w={624}>
            <BandBody>
              <Gallery>
                <GalleryItem>
                  <StyleThumb><BigAThumb /><ThumbDigit>0</ThumbDigit></StyleThumb>
                  <ItemLabel>Style 0</ItemLabel>
                </GalleryItem>
                <GalleryItem $on>
                  <StyleThumb><BigAThumb /><ThumbDigit>1</ThumbDigit></StyleThumb>
                  <ItemLabel>Style 1</ItemLabel>
                </GalleryItem>
                <ScrollCol>
                  <ScrollBtn><Chev w={18} h={11} c="#b9b09a" up /></ScrollBtn>
                  <ScrollBtn><Chev w={18} h={11} /></ScrollBtn>
                  <ScrollBtn $last>
                    <svg width="18" height="22" viewBox="0 0 18 22"><polyline points="2,2 9,9 16,2" fill="none" stroke="#5d584b" strokeWidth="3" /><polyline points="2,11 9,18 16,11" fill="none" stroke="#5d584b" strokeWidth="3" /></svg>
                  </ScrollBtn>
                </ScrollCol>
              </Gallery>
              <RowsCol $ml={24}>
                <CmdRow><CmdIcon><ADoc w={30} h={32} fs={36} /></CmdIcon><CmdLabel>Styles1</CmdLabel></CmdRow>
                <CmdRow><CmdIcon><Picture /></CmdIcon><CmdLabel>Styles2</CmdLabel></CmdRow>
                <CmdRow><CmdIcon><DocGlobe /></CmdIcon><CmdLabel>Styles3</CmdLabel><CmdChevron><Chev /></CmdChevron></CmdRow>
              </RowsCol>
            </BandBody>
            <BandTitle><BandLabel>Quick Styles</BandLabel></BandTitle>
          </Band>
          <Band $w={547}>
            <BandBody>
              <FontBody>
                <Line $gap={9}>
                  <Combo $w={383.5}><span>+ Minor (Cornelius)</span><ComboChev c="#5d584b" /></Combo>
                  <Combo $w={134.5}><span>11</span><ComboChev c="#5d584b" /></Combo>
                </Line>
                <Line $gap={8}>
                  <Strip>
                    <StripBtn $first $w={47}><IndentDoc /></StripBtn>
                    <StripBtn $w={47.5}><IndentDoc right /></StripBtn>
                  </Strip>
                  <Strip>
                    <StripBtn $first><StyleA kind="b" /></StripBtn>
                    <StripBtn><StyleA kind="i" /></StripBtn>
                    <StripBtn><StyleA kind="u" /></StripBtn>
                    <StripBtn><StyleA kind="s" /></StripBtn>
                  </Strip>
                  <Strip>
                    <StripBtn $first $on><AlignDoc kind="l" /></StripBtn>
                    <StripBtn><AlignDoc kind="c" /></StripBtn>
                    <StripBtn><AlignDoc kind="r" /></StripBtn>
                    <StripBtn><AlignDoc kind="j" /></StripBtn>
                  </Strip>
                </Line>
              </FontBody>
            </BandBody>
            <BandTitle><BandLabel>Font</BandLabel><Launcher><Launch /></Launcher></BandTitle>
          </Band>
          <Band $w={450}>
            <BandBody>
              <Spacer $w={5} />
              <LargeBtn $w={106}><LargeIcon $top={14}><Folder kind="local" /></LargeIcon><LargeLabel>Local</LargeLabel></LargeBtn>
              <LargeBtn $w={105}><LargeIcon $top={10}><Folder kind="remote" tall /></LargeIcon><LargeLabel>Remote</LargeLabel></LargeBtn>
              <LargeBtn $w={112}><LargeIcon $top={14}><Folder kind="saved" /></LargeIcon><LargeLabel>Saved</LargeLabel></LargeBtn>
              <SmallGrid>
                <NewDoc /><Printer />
                <OpenFolder /><Printer preview />
                <Drive w={32} h={32} /><WrenchDoc w={26} h={32} />
              </SmallGrid>
            </BandBody>
            <BandTitle><BandLabel>Document</BandLabel><Launcher><Launch /></Launcher></BandTitle>
          </Band>
          <Band $w={178}>
            <FindBody>
              <FindDoc />
              <FindLabel>Find</FindLabel>
              <FindToggle>(toggle)<Chev /></FindToggle>
            </FindBody>
          </Band>
        </Ribbon>
        <BlackLine />
        <Main>
          <Editor>
            <HRuler />
            <EditorBody>
              <VRuler />
              <Para>
                <ParaLine>Lorem ipsum dolor sit amet, consectetur adipiscing elit, sed do eiusmod tempor incididunt ut labore et dolore magna aliqua. Ut</ParaLine>
                <ParaLine>enim ad minim veniam, quis nostrud exercitation ullamco laboris nisi ut aliquip ex ea commodo consequat. Duis aute irure dolor in</ParaLine>
                <ParaLine>reprehenderit in voluptate velit esse cillum dolore eu fugiat nulla pariatur. Excepteur sint occaecat cupidatat non proident, sunt in</ParaLine>
                <ParaLine>culpa qui officia deserunt mollit anim id est laborum.</ParaLine>
              </Para>
            </EditorBody>
          </Editor>
          <Side>
            <SideLabel>Group 1</SideLabel>
            <CheckLine><CheckBox /><span>visible</span></CheckLine>
            <SideLabel>Group 2</SideLabel>
            <CheckLine><CheckBox /><span>visible</span></CheckLine>
            <SideLabel>Skin</SideLabel>
            <Combo><span>Dust Coffee</span><ComboChev c="#5d584b" /></Combo>
            <SideLabel>App menu</SideLabel>
            <CheckLine><CheckBox $on><Tick /></CheckBox><span>visible</span></CheckLine>
            <SideLabel>Taskbar</SideLabel>
            <CheckLine><CheckBox $on><Tick /></CheckBox><span>full</span></CheckLine>
            <SideLabel>Change 'Paragraph'</SideLabel>
            <ChangeBtn>change</ChangeBtn>
            <SideLabel>Locale</SideLabel>
            <Combo><span>English</span><ComboChev c="#5d584b" /></Combo>
          </Side>
        </Main>
        <StatusBar>
          <span>Right click to show menu</span>
          <ViewStrip>
            <ViewBtn $on $pos="l"><AlignDoc kind="l" /></ViewBtn>
            <ViewBtn><AlignDoc kind="c" /></ViewBtn>
            <ViewBtn><AlignDoc kind="r" /></ViewBtn>
            <ViewBtn $pos="r"><AlignDoc kind="j" /></ViewBtn>
          </ViewStrip>
        </StatusBar>
        {tips.map(([t, l, w]) => <KeyTip key={t} $l={l} $w={w}>{t}</KeyTip>)}
      </Win>
    </Page>
  );
}
